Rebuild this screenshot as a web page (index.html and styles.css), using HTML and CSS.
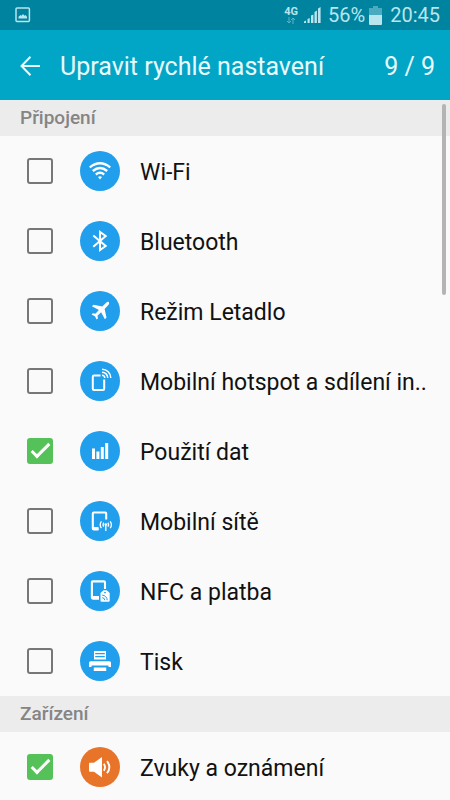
FILE: index.html
```html
<!DOCTYPE html>
<html lang="cs">
<head>
    <meta charset="UTF-8">
    <meta name="viewport" content="width=device-width, initial-scale=1.0">
    <title>Upravit rychlé nastavení</title>
    <link rel="stylesheet" href="styles.css">
</head>
<body>

    <div class="status-bar">
        <svg class="status-image" width="16" height="16" viewBox="0 0 16 16">
            <rect x="1" y="1" width="13.400" height="13.600" rx="1" fill="none" stroke="currentColor" stroke-width="1.500"/>
            <path d="M3.500 11.500V9.800L5.600 8l1 .8L8 7l1.500 1.800 1-.8 1.500 1.800v1.700z" fill="currentColor"/>
        </svg>
        <div class="status-right">
            <div class="network">
                <span>4G</span>
                <svg width="10" height="7" viewBox="0 0 10 7" fill="none" stroke="currentColor" stroke-width="1">
                    <path d="M3 0v6M1 4l2 2 2-2M7 7V1M5 3l2-2 2 2"/>
                </svg>
            </div>
            <svg class="signal" width="17" height="16" viewBox="0 0 17 16" fill="currentColor">
                <path d="M0 16v-1.500l2-1V16zM3.500 16v-4l2.200-1v5zM7 16V8.500l2.400-1V16zM10.500 16V5l2.400-1.500V16zM14 16V1.500L16.600 0v16z"/>
            </svg>
            <span class="percent">56%</span>
            <svg class="battery" width="13" height="19" viewBox="0 0 13 19" fill="currentColor">
                <path opacity=".4" d="M4 0h5v2h4v7H0V2h4z"/>
                <path d="M0 9h13v9a1 1 0 0 1-1 1H1a1 1 0 0 1-1-1z"/>
            </svg>
            <span class="clock">20:45</span>
        </div>
    </div>

    <header class="header">
        <button class="back-btn" type="button" aria-label="Zpět">
            <svg width="20" height="20" viewBox="0 0 20 20" fill="none" stroke="currentColor" stroke-width="2">
                <path d="M20 10H1.500M10.500 .800L1.500 10l9 9.200"/>
            </svg>
        </button>
        <h1>Upravit rychlé nastavení</h1>
        <span class="count">9 / 9</span>
    </header>

    <main class="settings">
        <h2>Připojení</h2>
        <label class="row">
            <input type="checkbox">
            <svg class="icon" viewBox="0 0 40 40" fill="none" stroke="currentColor" stroke-width="2.300">
                <path d="M9.800 16.300Q20 8.200 30.200 16.300M12.800 20Q20 14 27.200 20M15.800 23.500Q20 20.100 24.200 23.500"/>
                <path d="M18 26Q20 24.600 22 26L20 28.600z" fill="currentColor" stroke="none"/>
            </svg>
            <span class="name">Wi-Fi</span>
        </label>
        <label class="row">
            <input type="checkbox">
            <svg class="icon" viewBox="0 0 40 40" fill="none" stroke="currentColor" stroke-width="2">
                <path d="M13.300 14.500L25.700 25 20 29V11l5.700 4L13.300 25.800"/>
            </svg>
            <span class="name">Bluetooth</span>
        </label>
        <label class="row">
            <input type="checkbox">
            <svg class="icon" viewBox="0 0 40 40" fill="currentColor">
                <path d="M28.800 11.200c.7.800.3 2-.7 3.100L24.600 18l1.900 8.600-1.600 1.700-3.800-7-3.600 3.500.4 2.600-1.200 1.200-1.800-3.300-3.300-1.800 1.200-1.200 2.600.4 3.500-3.600-7-3.800 1.700-1.600 8.600 1.900 3.700-3.600c1-1 2.200-1.500 2.900-.9z"/>
            </svg>
            <span class="name">Režim Letadlo</span>
        </label>
        <label class="row">
            <input type="checkbox">
            <svg class="icon" viewBox="0 0 40 40" fill="none" stroke="currentColor" stroke-width="1.500">
                <path d="M20.500 14.500H14a1.200 1.200 0 0 0-1.200 1.200v12.100A1.200 1.200 0 0 0 14 29h9a1.200 1.200 0 0 0 1.200-1.200V18.500" stroke-width="2"/>
                <path d="M22 14.200a2.800 2.800 0 0 1 2.800 2.800M22 11.200a5.800 5.800 0 0 1 5.800 5.800M22 8.200a8.800 8.800 0 0 1 8.800 8.800"/>
            </svg>
            <span class="name">Mobilní hotspot a sdílení in..</span>
        </label>
        <label class="row">
            <input type="checkbox" checked>
            <svg class="icon" viewBox="0 0 40 40" fill="currentColor">
                <path d="M12 17.500h3V28h-3zM16.400 20.500h3V28h-3zM20.800 16h3v12h-3zM25.200 12h3v16h-3z"/>
            </svg>
            <span class="name">Použití dat</span>
        </label>
        <label class="row">
            <input type="checkbox">
            <svg class="icon" viewBox="0 0 40 40" fill="none" stroke="currentColor" stroke-width="1.300">
                <path d="M18.500 28.400H13.800a1 1 0 0 1-1-1V12.500a1 1 0 0 1 1-1h11.400a1 1 0 0 1 1 1V18.500" stroke-width="2.100"/>
                <path d="M12.800 27.500h5.700" stroke-width="3"/>
                <path d="M25.800 24v6M23.700 21.700q-1.300 2 0 4M27.900 21.700q1.300 2 0 4M21.400 20.300q-2.400 3.400 0 6.800M30.200 20.300q2.400 3.400 0 6.800"/>
                <circle cx="25.800" cy="23.500" r="1.300" fill="currentColor" stroke="none"/>
            </svg>
            <span class="name">Mobilní sítě</span>
        </label>
        <label class="row">
            <input type="checkbox">
            <svg class="icon" viewBox="0 0 40 40" fill="none" stroke="currentColor" stroke-width="2.100">
                <path d="M19 27.600H12.900a1 1 0 0 1-1-1V11.400a1 1 0 0 1 1-1H24a1 1 0 0 1 1 1V18"/>
                <path d="M11.900 26.600H19" stroke-width="3"/>
                <path d="M23.500 19.300h3.200l3 2.800v7.600a1 1 0 0 1-1 1h-7.200a1 1 0 0 1-1-1v-7.600z" fill="currentColor" stroke="none"/>
                <g class="tag-mark" stroke-width="1">
                    <path d="M22.200 24.200a5 5 0 0 1 5 5M22.200 26.700a2.500 2.500 0 0 1 2.500 2.500M24 21.700h2"/>
                </g>
            </svg>
            <span class="name">NFC a platba</span>
        </label>
        <label class="row">
            <input type="checkbox">
            <svg class="icon" viewBox="0 0 40 40" fill="currentColor">
                <path fill-rule="evenodd" d="M14 10h12v8.500H14zM15.200 12v1.200h9.600V12zM15.200 15v1.200h9.600V15z"/>
                <path d="M10.500 20.300h19a1.500 1.500 0 0 1 1.500 1.500V26h-2.500v-1.500h-17V26H9v-4.200a1.500 1.500 0 0 1 1.500-1.500zM13.800 26.500h12.400V30H13.800z"/>
            </svg>
            <span class="name">Tisk</span>
        </label>

        <h2>Zařízení</h2>
        <label class="row">
            <input type="checkbox" checked>
            <svg class="icon orange" viewBox="0 0 40 40" fill="none" stroke="currentColor" stroke-width="1.900">
                <path d="M10 15.700h4L22 10v20.500L14 24.800h-4a1 1 0 0 1-1-1v-7.100a1 1 0 0 1 1-1z" fill="currentColor" stroke="none"/>
                <path d="M23.800 16.800q2.400 3.500 0 7M27 14.200q4.700 6 0 12"/>
            </svg>
            <span class="name">Zvuky a oznámení</span>
        </label>
        <div class="scrollbar"></div>
    </main>

</body>
</html>
```

FILE: styles.css
```css
:root {
    --status-bg: #00839e;
    --header-bg: #01a5c6;
    --page-bg: #fafafa;
    --section-bg: #ececec;
    --blue: #219fec;
    --orange: #e8742a;
    --green: #54c258;
}

*,
*::before {
    box-sizing: border-box;
}

body {
    margin: 0;
    height: 100vh;
    display: flex;
    flex-direction: column;
    overflow: hidden;
    background-color: var(--page-bg);
    color: #111;
    font-family: Roboto, "Noto Sans", sans-serif;
}

/* Status bar */
.status-bar {
    display: flex;
    flex-shrink: 0;
    align-items: center;
    justify-content: space-between;
    height: 30px;
    padding: 0 10px 0 15px;
    background-color: var(--status-bg);
    color: #b9e5ef;
}

.status-right {
    display: flex;
    align-items: center;
    font-size: 20px;
}

.network {
    display: flex;
    flex-direction: column;
    align-items: center;
    margin-right: 6px;
    font-size: 11px;
    font-weight: 700;
    line-height: 10px;
}

.network svg {
    opacity: 0.5;
}

.signal {
    margin-right: 7px;
}

.battery {
    margin: 0 8px 0 4px;
}

/* Header */
.header {
    display: flex;
    flex-shrink: 0;
    align-items: center;
    height: 70px;
    padding: 2px 15px 0 20px;
    background-color: var(--header-bg);
    color: #e9fbff;
    font-size: 25px;
}

.back-btn {
    display: flex;
    width: 40px;
    padding: 0;
    border: none;
    background: none;
    color: inherit;
    cursor: pointer;
}

h1 {
    flex: 1;
    margin: 0;
    font-size: 25px;
    font-weight: 400;
}

/* Settings list */
.settings {
    position: relative;
    flex: 1;
    overflow: hidden;
}

h2 {
    margin: 0;
    padding: 0 20px;
    background-color: var(--section-bg);
    color: #858585;
    font-size: 19px;
    font-weight: 500;
    line-height: 36px;
}

.row {
    display: flex;
    align-items: center;
    height: 70px;
    padding: 0 20px 0 27px;
    cursor: pointer;
}

.row input {
    display: grid;
    place-items: center;
    flex-shrink: 0;
    width: 26px;
    height: 26px;
    margin: 0 27px 0 0;
    appearance: none;
    border: 2px solid #777;
    border-radius: 3px;
}

.row input:checked {
    border-color: var(--green);
    background-color: var(--green);
}

.row input:checked::before {
    content: "";
    width: 19px;
    height: 9px;
    margin-bottom: 6px;
    border: solid #fff;
    border-width: 0 0 3px 3px;
    transform: rotate(-45deg);
}

.icon {
    flex-shrink: 0;
    width: 40px;
    height: 40px;
    margin-right: 20px;
    border-radius: 50%;
    background-color: var(--blue);
    color: #fff;
}

.icon.orange {
    background-color: var(--orange);
}

.tag-mark {
    stroke: var(--blue);
}

.name {
    padding-top: 2px;
    font-size: 23px;
    white-space: nowrap;
}

.scrollbar {
    position: absolute;
    top: 4px;
    right: 4px;
    width: 4px;
    height: 191px;
    border-radius: 2px;
    background-color: #b4b4b4;
}
```
